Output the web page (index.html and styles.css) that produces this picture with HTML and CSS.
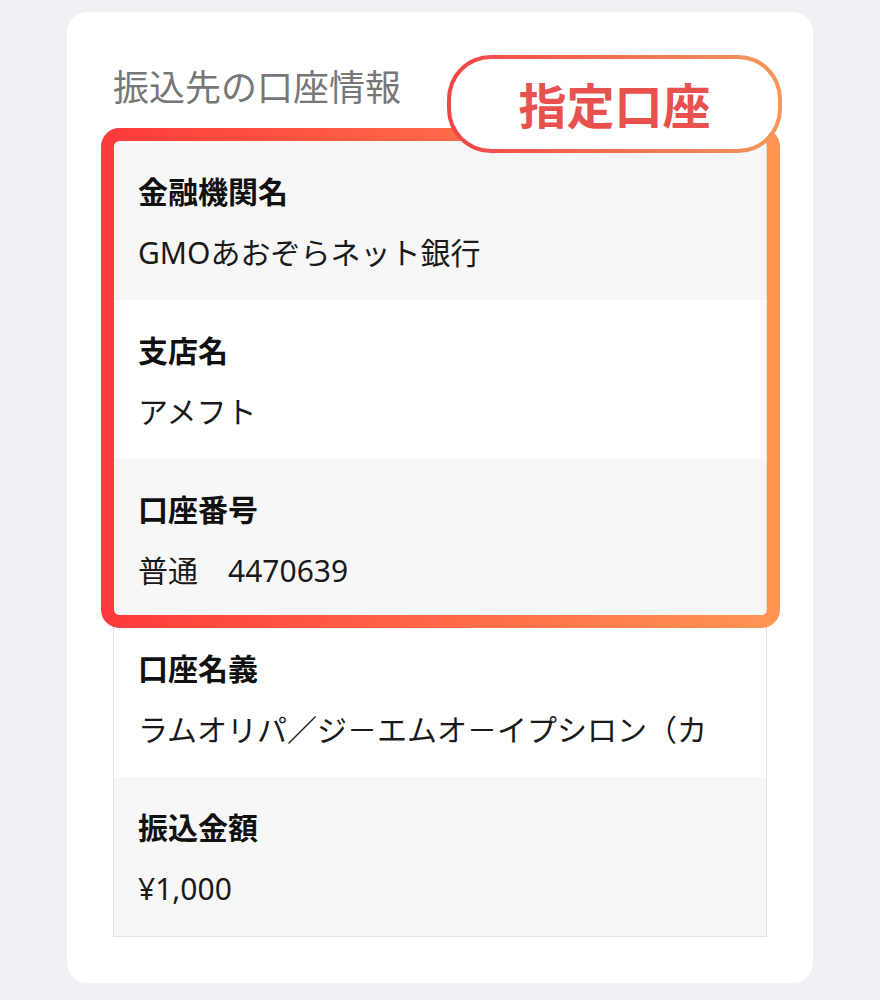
FILE: index.html
```html
<!DOCTYPE html>
<html lang="ja">
<head>
<meta charset="utf-8">
<title>振込先の口座情報</title>
<link rel="stylesheet" href="styles.css">
</head>
<body>
<div class="card">
  <h2 class="heading">振込先の口座情報</h2>
  <div class="table-wrap">
    <div class="table">
      <div class="row alt">
        <div class="label">金融機関名</div>
        <div class="value">GMOあおぞらネット銀行</div>
      </div>
      <div class="row">
        <div class="label">支店名</div>
        <div class="value">アメフト</div>
      </div>
      <div class="row alt">
        <div class="label">口座番号</div>
        <div class="value">普通　4470639</div>
      </div>
      <div class="row">
        <div class="label">口座名義</div>
        <div class="value">ラムオリパ／ジ－エムオ－イプシロン（カ</div>
      </div>
      <div class="row alt">
        <div class="label">振込金額</div>
        <div class="value">¥1,000</div>
      </div>
    </div>
    <svg class="highlight" width="679" height="500" viewBox="0 0 679 500" aria-hidden="true">
      <defs>
        <linearGradient id="hg" x1="0" y1="0" x2="1" y2="0">
          <stop offset="0" stop-color="#fd3b3c"/>
          <stop offset="1" stop-color="#ff9553"/>
        </linearGradient>
      </defs>
      <rect x="6.5" y="6.5" width="666" height="487" rx="12" ry="12" fill="none" stroke="url(#hg)" stroke-width="13"/>
    </svg>
    <div class="badge">指定口座</div>
  </div>
</div>
</body>
</html>
```
FILE: styles.css
```css
html, body {
  margin: 0;
  padding: 0;
}
body {
  background: #f0f0f5;
  font-family: "Noto Sans", "Noto Sans CJK JP", sans-serif;
  color: #151515;
}
.card {
  margin: 12px 0 0 67px;
  width: 746px;
  box-sizing: border-box;
  background: #ffffff;
  border-radius: 20px;
  padding: 51px 46px 46px;
}
.heading {
  margin: 0 0 27px;
  font-size: 36px;
  line-height: 50px;
  font-weight: 400;
  color: #777777;
}
.table-wrap {
  position: relative;
}
.table {
  border: 1px solid #e3e3e6;
  display: flex;
  flex-direction: column;
}
.row {
  height: 159px;
  box-sizing: border-box;
  padding: 32px 24px 0;
  background: #ffffff;
  display: flex;
  flex-direction: column;
  gap: 23px;
}
.row.alt {
  background: #f7f7f8;
}
.label {
  font-size: 30px;
  line-height: 38px;
  font-weight: 700;
  color: #111111;
}
.value {
  font-size: 30px;
  line-height: 38px;
  font-weight: 400;
  color: #1a1a1a;
  white-space: nowrap;
}
.highlight {
  position: absolute;
  left: -12px;
  top: -12px;
}
.badge {
  position: absolute;
  left: 334px;
  top: -85px;
  width: 335px;
  height: 98px;
  box-sizing: border-box;
  border: 4px solid transparent;
  border-radius: 44px;
  background:
    linear-gradient(#ffffff, #ffffff) padding-box,
    linear-gradient(90deg, #f04446, #f3985a) border-box;
  display: flex;
  align-items: center;
  justify-content: center;
  font-family: "Noto Sans CJK JP", sans-serif;
  font-size: 48px;
  font-weight: 700;
  color: #e9514f;
  line-height: 1;
  padding-bottom: 2px;
}
```
